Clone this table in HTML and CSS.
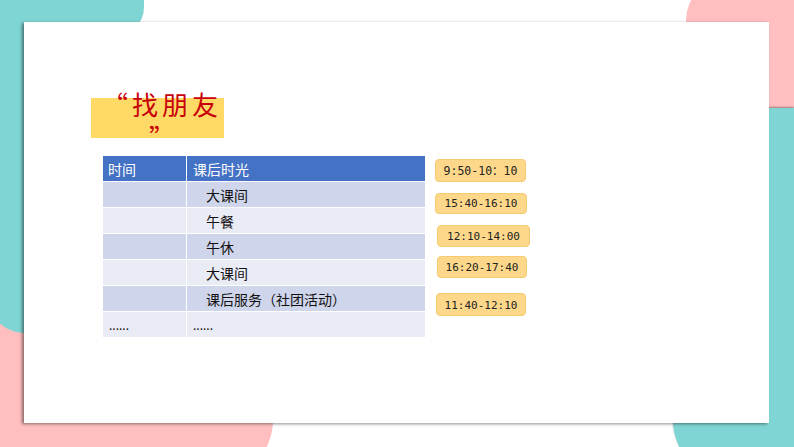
FILE: index.html
```html
<!DOCTYPE html>
<html lang="zh-CN">
<head>
  <meta charset="UTF-8">
  <meta name="viewport" content="width=device-width, initial-scale=1.0">
  <title>找朋友</title>
  <link rel="stylesheet" href="styles.css">
</head>
<body>
  <div class="slide">
    <div class="deco teal-top"></div>
    <div class="deco pink-bottom"></div>
    <div class="deco teal-left"></div>
    <div class="deco pink-top"></div>
    <div class="deco teal-right"></div>

    <div class="card">
      <div class="title-box">
        <h2 class="title">
          <span class="line">“找朋友</span>
          <span class="line second">”</span>
        </h2>
      </div>

      <div class="content">
        <table class="schedule">
          <tr>
            <th class="col-time">时间</th>
            <th>课后时光</th>
          </tr>
          <tr><td></td><td class="indent">大课间</td></tr>
          <tr><td></td><td class="indent">午餐</td></tr>
          <tr><td></td><td class="indent">午休</td></tr>
          <tr><td></td><td class="indent">大课间</td></tr>
          <tr><td></td><td class="indent">课后服务（社团活动）</td></tr>
          <tr><td class="dots">......</td><td class="dots">......</td></tr>
        </table>

        <div class="times">
          <div class="pill pill-1">9:50-10：10</div>
          <div class="pill pill-2">15:40-16:10</div>
          <div class="pill pill-3">12:10-14:00</div>
          <div class="pill pill-4">16:20-17:40</div>
          <div class="pill pill-5">11:40-12:10</div>
        </div>
      </div>
    </div>
  </div>
</body>
</html>
```

FILE: styles.css
```css
body {
  margin: 0;
  padding: 0;
  background-color: white;
  font-family: "Noto Sans CJK SC", "Noto Sans", sans-serif;
}

.slide {
  position: relative;
  width: 794px;
  height: 447px;
  overflow: hidden;
  padding: 22px 0 0 24px;
  box-sizing: border-box;
}

/* 背景装饰色块 */
.deco {
  position: absolute;
}

.teal-top {
  left: 0;
  top: 0;
  width: 144px;
  height: 37px;
  background-color: #7fd5d3;
  border-bottom-right-radius: 30px;
}

.teal-left {
  left: -5px;
  top: 0;
  width: 60px;
  height: 333px;
  background-color: #7fd5d3;
  border-bottom-left-radius: 30px 22px;
}

.pink-bottom {
  left: 0;
  top: 300px;
  width: 273px;
  height: 180px;
  background-color: #ffbfc0;
  border-bottom-right-radius: 60px;
}

.pink-top {
  left: 686px;
  top: -20px;
  width: 108px;
  height: 128px;
  background-color: #ffbfc0;
  border-top-left-radius: 40px;
}

.teal-right {
  left: 673px;
  top: 108px;
  width: 121px;
  height: 372px;
  background-color: #7fd5d3;
  border-bottom-left-radius: 60px;
  box-shadow: 0 -1px 2px rgba(0, 0, 0, 0.35);
}

.card {
  position: relative;
  z-index: 1;
  width: 745px;
  height: 401px;
  background-color: white;
  box-shadow: -2px 1px 3px rgba(0, 0, 0, 0.45);
  padding: 76px 0 0 67px;
  box-sizing: border-box;
}

.title-box {
  width: 133px;
  height: 40px;
  background-color: #ffd966;
}

.title {
  margin: 0;
  position: relative;
  top: -9px;
  font-size: 26px;
  font-weight: normal;
  line-height: 30px;
  letter-spacing: 4px;
  color: #c8000a;
  white-space: nowrap;
}

.title .line {
  display: block;
  padding-left: 11px;
}

.title .line.second {
  padding-left: 58px;
  margin-top: 9px;
  line-height: 18px;
}

.content {
  display: flex;
  gap: 9px;
  margin: 17px 0 0 11px;
}

.schedule {
  width: 324px;
  border-collapse: collapse;
  font-size: 14px;
  color: #111;
}

.schedule th,
.schedule td {
  height: 25px;
  padding: 0 6px;
  border: 1px solid white;
  text-align: left;
  font-weight: normal;
  line-height: 1;
}

.schedule th {
  background-color: #4472c4;
  color: white;
}

.schedule th.col-time {
  width: 72px;
  padding-left: 5px;
}

.schedule tr:nth-child(even) td {
  background-color: #cfd5ea;
}

.schedule tr:nth-child(odd) td {
  background-color: #e9ebf5;
}

.schedule td.indent {
  padding-left: 19px;
}

.schedule td.dots {
  font-size: 12px;
  vertical-align: middle;
}

.times {
  display: flex;
  flex-direction: column;
  align-items: flex-start;
  padding-top: 4px;
}

.pill {
  height: 22px;
  line-height: 22px;
  padding: 0 4px;
  background-color: #fdd88a;
  border: 1px solid #f6ca70;
  border-radius: 4px;
  font-family: "DejaVu Sans Mono", "Noto Sans CJK SC", monospace;
  font-size: 11px;
  color: #222;
  box-sizing: border-box;
  text-align: center;
  white-space: nowrap;
}

.pill-1 { width: 91px; height: 23px; line-height: 23px; font-size: 11.5px; }
.pill-2 { width: 92px; height: 21px; line-height: 20px; margin-top: 11px; }
.pill-3 { width: 93px; margin-top: 11px; margin-left: 2px; }
.pill-4 { width: 90px; margin-top: 9px; margin-left: 2px; }
.pill-5 { width: 90px; height: 23px; line-height: 23px; margin-top: 15px; margin-left: 1px; }
```
